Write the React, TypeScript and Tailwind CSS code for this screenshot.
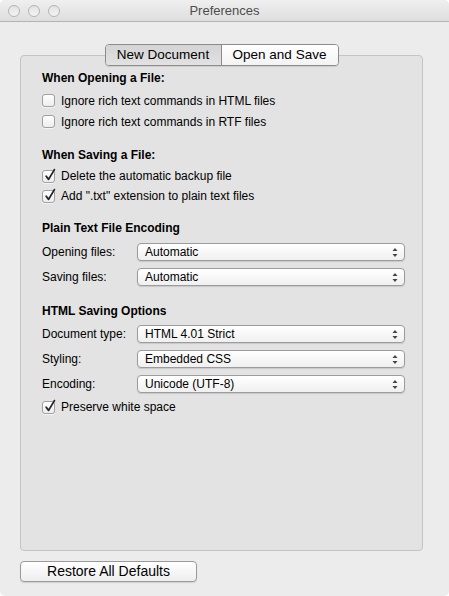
import React from "react";

const font = { fontFamily: '"Liberation Sans", Arial, sans-serif' };

function Checkbox({ checked, label }: { checked?: boolean; label: string }) {
  return (
    <div className="flex items-center h-full">
      <div className="relative w-[13px] h-[13px] rounded-[3px] border border-[#a0a0a0] bg-gradient-to-b from-[#ffffff] to-[#ededed] shadow-[0_1px_0_rgba(255,255,255,0.6)]">
        {checked && (
          <svg className="absolute left-[1px] top-[-3px]" width="12" height="14" viewBox="0 0 12 14">
            <path d="M2.2 8.2 L4.6 11.4 L10.4 1.6" fill="none" stroke="#262626" strokeWidth="1.8" strokeLinecap="round" strokeLinejoin="round" />
          </svg>
        )}
      </div>
      <span className="ml-[6px] text-[12px] text-[#000]">{label}</span>
    </div>
  );
}

function Popup({ label, value }: { label: string; value: string }) {
  return (
    <div className="flex items-center h-[18px]">
      <div className="w-[95px] text-[12px] text-[#000] whitespace-nowrap">{label}</div>
      <div className="relative flex items-center w-[268px] h-[18px] rounded-[4px] border border-[#9c9c9c] bg-gradient-to-b from-[#ffffff] to-[#f0f0f0] shadow-[0_1px_1px_rgba(0,0,0,0.12)] pl-[7px]">
        <span className="text-[12px] text-[#000]">{value}</span>
        <svg className="absolute right-[6px] top-[3px]" width="6" height="11" viewBox="0 0 6 11">
          <path d="M3 1 L5.5 4 L0.5 4 Z" fill="#444" />
          <path d="M3 10 L5.5 7 L0.5 7 Z" fill="#444" />
        </svg>
      </div>
    </div>
  );
}

function Heading({ children }: { children: React.ReactNode }) {
  return <div className="h-[16px] flex items-center text-[12px] font-bold text-[#000]">{children}</div>;
}

export default function App() {
  return (
    <div style={font} className="w-[449px] h-[596px] bg-white">
      <div className="w-[449px] h-[596px] flex flex-col bg-[#ececec] rounded-[5px] overflow-hidden">
        {/* Title bar */}
        <div className="relative h-[22px] flex items-center justify-center border-b border-[#b4b4b4] bg-gradient-to-b from-[#efefef] to-[#dedede] shrink-0">
          <div className="absolute left-[8px] top-[5px] flex gap-[8px]">
            <div className="w-[12px] h-[12px] rounded-full border border-[#b3b3b3] bg-gradient-to-b from-[#e2e2e2] to-[#f4f4f4]" />
            <div className="w-[12px] h-[12px] rounded-full border border-[#b3b3b3] bg-gradient-to-b from-[#e2e2e2] to-[#f4f4f4]" />
            <div className="w-[12px] h-[12px] rounded-full border border-[#b3b3b3] bg-gradient-to-b from-[#e2e2e2] to-[#f4f4f4]" />
          </div>
          <span className="text-[13px] text-[#4d4d4d]">Preferences</span>
        </div>

        <div className="flex flex-col pl-[20px] pr-[26px] pt-[33px]">
          {/* Tab box */}
          <div className="h-[496px] flex flex-col rounded-[4px] border border-[#c4c4c4] bg-[#e3e3e3] pl-[21px] pr-[17px]">
            <div className="-mt-[12px] flex justify-center pr-[4px] h-[22px]">
              <div className="flex h-[22px] rounded-[4px] border border-[#8c8c8c] overflow-hidden shadow-[0_1px_1px_rgba(0,0,0,0.1)]">
                <div className="w-[116px] flex items-center justify-center text-[13.5px] text-[#000] bg-gradient-to-b from-[#d4d4d4] to-[#e2e2e2] border-r border-[#8c8c8c]">
                  New Document
                </div>
                <div className="w-[116px] flex items-center justify-center text-[13.5px] text-[#000] bg-gradient-to-b from-[#ffffff] to-[#f3f3f3]">
                  Open and Save
                </div>
              </div>
            </div>

            <div className="mt-[4px]"><Heading>When Opening a File:</Heading></div>
            <div className="mt-[4px] h-[21px]"><Checkbox label="Ignore rich text commands in HTML files" /></div>
            <div className="h-[21px]"><Checkbox label="Ignore rich text commands in RTF files" /></div>

            <div className="mt-[15px]"><Heading>When Saving a File:</Heading></div>
            <div className="mt-[3px] h-[20px]"><Checkbox checked label="Delete the automatic backup file" /></div>
            <div className="h-[20px]"><Checkbox checked label={'Add ".txt" extension to plain text files'} /></div>

            <div className="mt-[14px]"><Heading>Plain Text File Encoding</Heading></div>
            <div className="mt-[7px]"><Popup label="Opening files:" value="Automatic" /></div>
            <div className="mt-[7px]"><Popup label="Saving files:" value="Automatic" /></div>

            <div className="mt-[17px]"><Heading>HTML Saving Options</Heading></div>
            <div className="mt-[6px]"><Popup label="Document type:" value="HTML 4.01 Strict" /></div>
            <div className="mt-[7px]"><Popup label="Styling:" value="Embedded CSS" /></div>
            <div className="mt-[7px]"><Popup label="Encoding:" value="Unicode (UTF-8)" /></div>
            <div className="mt-[4px] h-[20px]"><Checkbox checked label="Preserve white space" /></div>
          </div>

          <div className="mt-[10px]">
            <button className="w-[177px] h-[21px] rounded-[4px] border border-[#9a9a9a] bg-gradient-to-b from-[#ffffff] to-[#eeeeee] shadow-[0_1px_1px_rgba(0,0,0,0.12)] text-[14px] text-[#000] flex items-center justify-center">
              Restore All Defaults
            </button>
          </div>
        </div>
      </div>
    </div>
  );
}
